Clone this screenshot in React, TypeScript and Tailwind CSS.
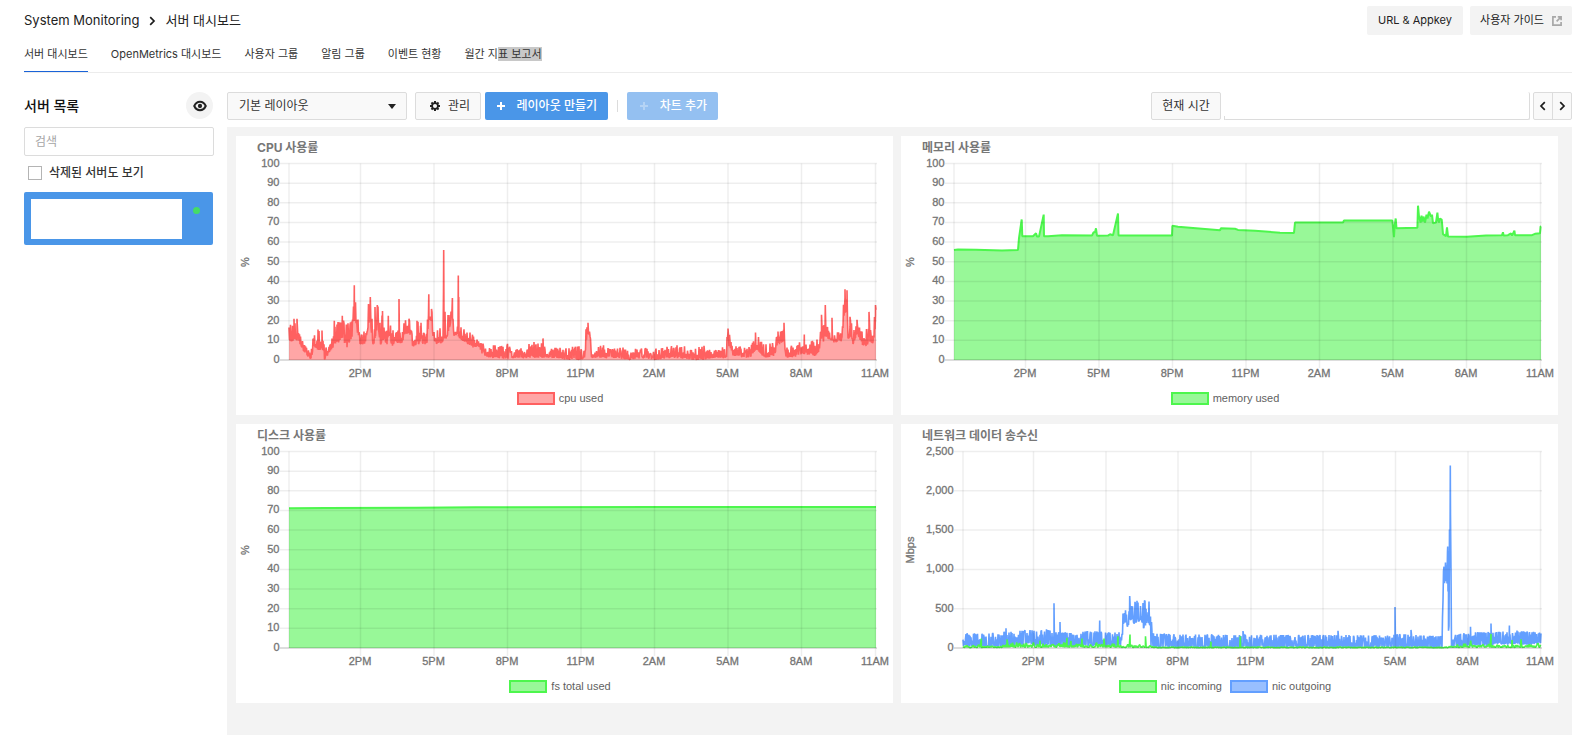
import React from "react";

type Point = [number, number];
type Band = [number, number, number];

interface Series {
  name: string;
  stroke: string;
  fill: string;
  filled: boolean;
  points: Point[];
}

interface ChartProps {
  title: string;
  unit: string;
  max: number;
  ticks: string[];
  left: number;
  hours: number[];
  series: Series[];
}

const TOP = 27.5;
const BOTTOM = 224;
const RIGHT = 640;
const HOUR_LABELS = ["2PM", "5PM", "8PM", "11PM", "2AM", "5AM", "8AM", "11AM"];

const RED = { stroke: "#ff6060", fill: "#ffa6a6" };
const GREEN = { stroke: "#4df64d", fill: "#98f898" };
const BLUE = { stroke: "#639fff", fill: "#98bfff" };

function makeRandom(seed: number) {
  let s = seed;
  return () => {
    s = (s * 1664525 + 1013904223) % 4294967296;
    return s / 4294967296;
  };
}

/* Samples a jittering signal between a low and a high envelope. */
function sample(bands: Band[], spikes: Point[], step: number, seed: number, bias: number): Point[] {
  const rnd = makeRandom(seed);
  const out: Point[] = [];
  const end = bands[bands.length - 1][0];
  let i = 0;
  let up = false;
  for (let x = bands[0][0]; x <= end; x += step) {
    while (i < bands.length - 2 && bands[i + 1][0] <= x) i++;
    const a = bands[i];
    const b = bands[i + 1];
    const t = (x - a[0]) / (b[0] - a[0]);
    const lo = a[1] + (b[1] - a[1]) * t;
    const hi = a[2] + (b[2] - a[2]) * t;
    up = rnd() < 0.7 ? !up : up;
    const r = Math.pow(rnd(), bias);
    out.push([x, up ? hi - (hi - lo) * 0.7 * r : lo + (hi - lo) * 0.15 * r]);
  }
  spikes.forEach(([sx, v]) => {
    out.push([sx, v]);
  });
  return out.sort((p, q) => p[0] - q[0]);
}

const cpu = sample(
  [
    [53, 10, 18], [57, 9, 21], [62, 10, 21], [66, 6, 11], [69, 3, 9], [76, 0, 7], [77, 7, 12], [82, 4, 15],
    [86, 6, 15], [88, 0, 9], [94, 4, 8], [98, 7, 19], [106, 10, 22], [111, 6, 18], [116, 11, 22], [117, 18, 33],
    [119, 20, 34], [121, 15, 23], [124, 8, 16], [129, 8, 16], [132, 15, 28], [134, 22, 32], [136, 8, 28], [138, 8, 13],
    [140, 12, 27], [142, 18, 28], [144, 7, 20], [147, 10, 25], [151, 8, 20], [153, 12, 22], [156, 7, 14], [159, 8, 20],
    [166, 8, 15], [168, 12, 20], [173, 14, 21], [177, 6, 13], [181, 8, 20], [185, 8, 18], [190, 8, 12], [191, 8, 25],
    [193, 20, 33], [196, 18, 26], [197, 10, 14], [201, 8, 15], [204, 9, 19], [206, 8, 18], [207, 9, 40], [209, 10, 31],
    [212, 12, 24], [216, 22, 31], [218, 12, 16], [221, 13, 17], [224, 10, 20], [229, 9, 15], [237, 6, 14], [242, 7, 13],
    [246, 3, 9], [251, 1, 6], [257, 1, 8], [264, 1, 8], [271, 0, 9], [277, 1, 6], [286, 1, 6], [294, 1, 9],
    [307, 1, 10], [311, 1, 5], [321, 1, 7], [331, 0, 6], [344, 0, 8], [349, 1, 5], [350, 8, 16], [352, 14, 19],
    [354, 12, 16], [355, 1, 6], [367, 1, 8], [381, 1, 6], [392, 0, 8], [407, 1, 7], [421, 0, 6], [442, 1, 8],
    [457, 0, 6], [466, 0, 8], [477, 1, 5], [490, 1, 8], [491, 2, 15], [492, 8, 16], [495, 5, 11], [497, 2, 7],
    [514, 1, 7], [520, 5, 13], [526, 2, 10], [531, 1, 8], [538, 2, 9], [542, 8, 14], [546, 8, 15], [548, 10, 19],
    [550, 1, 7], [554, 1, 7], [562, 2, 9], [569, 3, 9], [579, 2, 10], [583, 4, 11], [586, 10, 23], [587, 7, 18],
    [589, 12, 28], [592, 10, 16], [596, 10, 21], [599, 8, 13], [602, 10, 17], [606, 9, 12], [608, 22, 34],
    [611, 25, 36], [612, 10, 18], [614, 12, 22], [617, 8, 16], [621, 13, 20], [626, 8, 15], [629, 5, 12],
    [633, 9, 22], [636, 8, 14], [638, 10, 20], [640, 20, 28],
  ],
  [
    [58, 21], [61, 21], [82, 15.5], [86, 15], [98.3, 20], [106.3, 22.5], [110.3, 18],
    [118.3, 38], [134.3, 32], [139, 27], [141.3, 28], [146.5, 25], [152.3, 22.5], [163, 31], [173, 21], [181, 20], [185, 19],
    [192.8, 33.5], [195.5, 26], [207.7, 56], [216.4, 31.5], [222.3, 43], [222.8, 32],
    [307, 11], [352, 19], [492, 16], [519.5, 14], [542, 14.5], [544.5, 14.5], [548, 19], [568.3, 13], [585.5, 23],
    [589.3, 28], [596, 21.5], [609, 36], [611, 35.5], [614, 22], [621, 20.5], [633, 24.5], [639.5, 28],
  ],
  0.5,
  77,
  1
);

const memory: Point[] = [
  [53, 56], [57, 56.3], [75, 56.1], [101, 55.7], [117, 56], [118, 62], [120.7, 71.5], [121.3, 63], [132, 63], [135, 64.5],
  [136, 62.8], [138, 62.8], [142.7, 74], [143, 63], [147, 63], [161, 63.5], [191, 63.3], [192.5, 65], [194, 65], [195, 67],
  [196, 63.2], [207, 63.3], [209, 64], [212, 63.5], [217, 74.5], [217.5, 63.4], [271, 63.3], [271.4, 68.3], [277, 67.8],
  [319, 66], [320, 67], [334, 66.8], [337, 66.2], [354, 65.8], [379, 64.8], [393, 64.7], [394, 70], [442, 70], [443, 71],
  [491.3, 71], [493, 62.5], [493.6, 68], [494.7, 72], [495.5, 67], [516.4, 67.3], [517, 78.5], [518, 73], [519.6, 70],
  [520.5, 73.5], [521.5, 70.5], [522.5, 73], [524, 70], [525.5, 74], [526.5, 72], [528, 75.5], [530, 73], [531, 74],
  [532, 69.5], [535, 70], [536.4, 75], [537.2, 71], [538, 70], [539, 72], [540.7, 71.5],
  [542, 64], [545, 63], [546, 67.5], [547, 62.8], [566, 62.7], [585, 63.3], [601, 63.5], [602, 65], [602.6, 63.3],
  [607, 63.5], [610, 64.5], [611, 63.3], [613.4, 65.8], [614, 63.5], [631, 63.5], [634, 64.2], [639, 64.5], [639.6, 68],
  [640, 68],
];

const disk: Point[] = [[53, 71.1], [90, 71.2], [180, 71.4], [240, 71.6], [420, 71.7], [560, 71.7], [640, 71.8]];

const outgoing = sample(
  [
    [62, 20, 190], [80, 20, 185], [100, 15, 190], [105, 20, 230], [112, 20, 200], [128, 60, 240], [136, 20, 210],
    [145, 30, 240], [155, 20, 200], [175, 20, 190], [188, 30, 220], [205, 20, 200], [221, 40, 200], [222, 290, 540],
    [225, 330, 470], [227, 250, 430], [229, 370, 620], [233, 310, 610], [237, 330, 600], [240, 370, 550], [243, 220, 610],
    [246, 340, 580], [249, 290, 600], [250, 10, 500], [251, 10, 200], [256, 5, 180], [300, 5, 170], [400, 5, 165],
    [492, 5, 165], [496, 5, 180], [520, 5, 160], [541, 5, 150], [542, 600, 950], [544, 900, 1120], [547, 720, 1290],
    [548, 220, 1500], [549, 1000, 2200], [550, 10, 1200], [551, 10, 60], [553, 10, 170], [570, 20, 200], [588, 30, 200],
    [600, 50, 210], [610, 50, 230], [625, 40, 210], [640, 60, 210],
  ],
  [
    [105, 250], [153, 570], [159, 330], [198.7, 350], [228.7, 660], [342, 215], [437, 220], [494, 520], [510, 230],
    [546.7, 1290], [547.5, 220], [549.3, 2320], [569.5, 270], [590, 310], [608.4, 285],
  ],
  0.5,
  2024,
  2.4
);

const incoming = sample(
  [
    [62, 4, 40], [80, 4, 60], [81, 5, 30], [100, 5, 50], [110, 5, 80], [140, 5, 70], [170, 5, 80], [200, 5, 80],
    [220, 5, 50], [250, 5, 40], [256, 3, 16], [542, 3, 16], [560, 5, 60], [600, 5, 50], [640, 5, 70],
  ],
  [
    [80.3, 120], [106, 110], [139, 95], [166, 130], [170, 90], [181, 120], [203, 120], [217, 150], [229, 170], [244.5, 150],
    [310, 80], [339.3, 150], [569.7, 95], [590, 180], [611, 100], [620, 110],
  ],
  0.8,
  5,
  0.6
);

const PERCENT_TICKS = ["0", "10", "20", "30", "40", "50", "60", "70", "80", "90", "100"];
const HOURS = [124.5, 198, 271.5, 345, 418.5, 492, 565.5, 639.5];
const NET_HOURS = [132.5, 205, 277, 350, 422, 494.5, 567, 639.5];

const charts: ChartProps[] = [
  {
    title: "CPU 사용률", unit: "%", max: 100, ticks: PERCENT_TICKS, left: 53, hours: HOURS,
    series: [{ name: "cpu used", ...RED, filled: true, points: cpu }],
  },
  {
    title: "메모리 사용률", unit: "%", max: 100, ticks: PERCENT_TICKS, left: 53, hours: HOURS,
    series: [{ name: "memory used", ...GREEN, filled: true, points: memory }],
  },
  {
    title: "디스크 사용률", unit: "%", max: 100, ticks: PERCENT_TICKS, left: 53, hours: HOURS,
    series: [{ name: "fs total used", ...GREEN, filled: true, points: disk }],
  },
  {
    title: "네트워크 데이터 송수신", unit: "Mbps", max: 2500,
    ticks: ["0", "500", "1,000", "1,500", "2,000", "2,500"], left: 62, hours: NET_HOURS,
    series: [
      { name: "nic incoming", ...GREEN, filled: false, points: incoming },
      { name: "nic outgoing", ...BLUE, filled: false, points: outgoing },
    ],
  },
];

function ChartCard({ title, unit, max, ticks, left, hours, series }: ChartProps) {
  const y = (v: number) => BOTTOM - (v / max) * (BOTTOM - TOP);
  const path = (pts: Point[]) => "M" + pts.map(([px, v]) => `${px.toFixed(1)} ${y(v).toFixed(1)}`).join("L");
  const step = max / (ticks.length - 1);
  return (
    <section className="bg-white">
      <h2 className="h-[22px] pl-[21px] pt-[2px] text-[12px] leading-[20px] font-bold text-[#777777]">{title}</h2>
      <svg
        viewBox="0 22 657 224"
        className="block w-full font-['Liberation_Sans',Arial,sans-serif] text-[11px]"
        role="img"
        aria-label={title}
      >
        {[...series].reverse().map((s) => (
          <g key={s.name}>
            {s.filled && <path d={`${path(s.points)}L${RIGHT} ${BOTTOM}L${left} ${BOTTOM}Z`} fill={s.fill} />}
            <path
              d={path(s.points)}
              fill="none"
              stroke={s.stroke}
              strokeWidth={s.points.length < 120 ? 2 : 1.6}
              strokeLinejoin="bevel"
            />
          </g>
        ))}
        <g stroke="#000000" strokeWidth="1.5" strokeOpacity="0.065">
          {ticks.map((t, i) => (
            <line key={t} x1={left - 9} x2={RIGHT + 1} y1={y(i * step)} y2={y(i * step)} strokeOpacity={i === 0 ? 0.18 : 0.065} />
          ))}
          {[left, ...hours].map((h) => (
            <line key={h} x1={h} x2={h} y1={TOP} y2={BOTTOM + (h === left ? 0 : 8)} />
          ))}
        </g>
        <g fill="#747474" stroke="#747474" strokeWidth="0.3">
          {ticks.map((t, i) => (
            <text key={t} x={left - 9.5} y={y(i * step) + 3} textAnchor="end">{t}</text>
          ))}
          {hours.map((h, i) => (
            <text key={h} x={h - 0.5} y={241} textAnchor="middle">{HOUR_LABELS[i]}</text>
          ))}
          <text transform="translate(13 126) rotate(-90)" textAnchor="middle">{unit}</text>
        </g>
      </svg>
      <ul className="flex h-[33px] items-center justify-center gap-2 pr-[9px] font-['Liberation_Sans',Arial,sans-serif] text-[11px] text-[#5f5f5f]">
        {series.map((s) => (
          <li key={s.name} className="flex items-center gap-1">
            <span className="h-[13px] w-[38px] border-2" style={{ borderColor: s.stroke, backgroundColor: s.fill }} />
            {s.name}
          </li>
        ))}
      </ul>
    </section>
  );
}

function Chevron({ flip = false }: { flip?: boolean }) {
  return (
    <svg viewBox="0 0 10 10" className="h-[10px] w-[10px]" fill="none" stroke="#1c1c1c" strokeWidth="1.7" aria-hidden="true">
      <path d={flip ? "M6.8 1.2L3 5l3.8 3.8" : "M3.2 1.2L7 5 3.2 8.8"} />
    </svg>
  );
}

function EyeIcon() {
  return (
    <svg viewBox="0 0 24 24" className="h-4 w-4" fill="none" stroke="#222222" aria-hidden="true">
      <path d="M3.400 12C5.200 7.900 8.400 5.800 12 5.800s6.800 2.100 8.600 6.200c-1.800 4.100-5 6.200-8.600 6.200S5.200 16.100 3.400 12z" strokeWidth="3" />
      <circle cx="12" cy="12" r="3.200" fill="#222222" stroke="none" />
    </svg>
  );
}

function GearIcon() {
  return (
    <svg viewBox="0 0 20 20" className="h-[10px] w-[10px]" fill="none" stroke="#222222" aria-hidden="true">
      <circle cx="10" cy="10" r="5.800" strokeWidth="3.400" />
      <path
        d="M10 0v4M10 16v4M0 10h4M16 10h4M2.900 2.900l2.800 2.800M14.300 14.300l2.800 2.800M17.100 2.900l-2.800 2.800M5.700 14.300l-2.800 2.800"
        strokeWidth="4"
      />
    </svg>
  );
}

function PlusIcon() {
  return (
    <svg viewBox="0 0 8 8" className="h-2 w-2" stroke="currentColor" strokeWidth="2" aria-hidden="true">
      <path d="M4 0v8M0 4h8" />
    </svg>
  );
}

function ExternalIcon() {
  return (
    <svg viewBox="0 0 10 10" className="h-[10px] w-[10px]" fill="none" stroke="#a8a8a8" strokeWidth="1.700" aria-hidden="true">
      <path d="M4 .9H.9v8.200h8.200V6M5.800.9h3.300v3.300M9 1L4.600 5.400" />
    </svg>
  );
}

const tabs = ["서버 대시보드", "OpenMetrics 대시보드", "사용자 그룹", "알림 그룹", "이벤트 현황"];

export default function App() {
  return (
    <div className="flex min-h-screen flex-col bg-white pr-[15px] pl-6 font-['Inter','Noto_Sans_CJK_KR',sans-serif] text-[12px] text-[#333333]">
      <header className="flex h-[41px] items-center justify-between">
        <nav className="flex items-center gap-2 text-[13px] text-[#222222]" aria-label="breadcrumb">
          <a href="#monitoring">System Monitoring</a>
          <Chevron />
          <h1>서버 대시보드</h1>
        </nav>
        <div className="flex gap-[7px] text-[11px] text-[#222222]">
          <button className="h-[29px] w-24 rounded-xs bg-[#f3f3f3]">URL &amp; Appkey</button>
          <a href="#guide" className="flex h-[29px] w-[102px] items-center justify-center gap-2 rounded-xs bg-[#f3f3f3]">
            사용자 가이드
            <ExternalIcon />
          </a>
        </div>
      </header>

      <nav className="flex h-8 gap-[23px] border-b border-[#ececec] text-[11px]" aria-label="tabs">
        {tabs.map((t, i) => (
          <a
            key={t}
            href="#tab"
            className={
              i === 0
                ? "h-[31px] border-b border-[#1a63d8] pt-[4px] leading-[18px]"
                : "h-[31px] pt-[4px] leading-[18px]"
            }
          >
            {t}
          </a>
        ))}
        <a href="#tab" className="h-[31px] pt-[4px] leading-[18px]">
          월간 지<span className="inline-block h-[14px] bg-[#c8c8c8] leading-[14px]">표 보고서</span>
        </a>
      </nav>

      <div className="flex grow gap-[13px] pt-[19px]">
        <aside className="w-[190px] shrink-0">
          <div className="flex h-[27px] items-center justify-between pr-px">
            <h2 className="text-[14px] font-medium text-[#111111]">서버 목록</h2>
            <button className="flex h-[27px] w-[27px] items-center justify-center rounded-full bg-[#f3f3f3]" aria-label="보기 설정">
              <EyeIcon />
            </button>
          </div>
          <input
            type="search"
            aria-label="검색"
            placeholder="검색"
            className="mt-2 block h-[29px] w-full rounded-xs border border-[#dcdcdc] px-[10px] placeholder:text-[#a6a6a6]"
          />
          <label className="mt-[7px] flex h-5 items-center gap-[7px] pl-1 text-[12px] font-medium">
            <input type="checkbox" className="h-[14px] w-[14px] appearance-none border border-[#b4b4b4] bg-white" />
            삭제된 서버도 보기
          </label>
          <button className="mt-[9px] flex h-[53px] w-[189px] gap-[11px] rounded-xs bg-[#4a96e8] p-[7px]" aria-label="서버">
            <span className="h-10 w-[151px] bg-white" />
            <span className="mt-2 h-[7px] w-[7px] rounded-full bg-[#45dc66]" />
          </button>
        </aside>

        <main className="flex min-w-0 grow flex-col">
          <div className="flex h-7 items-center">
            <label className="relative">
              <select
                aria-label="레이아웃"
                className="block h-7 w-[180px] appearance-none rounded-xs border border-[#dcdcdc] bg-[#f9f9f9] pl-[11px]"
              >
                <option>기본 레이아웃</option>
              </select>
              <svg viewBox="0 0 8 5" className="pointer-events-none absolute top-[12px] right-[11px] h-[5px] w-2" aria-hidden="true">
                <path d="M0 0h8L4 5z" fill="#222222" />
              </svg>
            </label>
            <button className="ml-2 flex h-7 w-[66px] items-center justify-end gap-2 rounded-xs border border-[#dcdcdc] bg-[#f9f9f9] pr-[10px]">
              <GearIcon />
              관리
            </button>
            <button className="ml-1 flex h-7 w-[123px] items-center justify-end gap-3 rounded-xs bg-[#4a96e8] pr-[11px] font-medium text-white">
              <PlusIcon />
              레이아웃 만들기
            </button>
            <span className="mx-[9px] h-3 w-px bg-[#dcdcdc]" />
            <button disabled className="flex h-7 w-[91px] items-center justify-end gap-3 rounded-xs bg-[#94c0f1] pr-[11px] font-medium text-white">
              <span className="opacity-30"><PlusIcon /></span>
              차트 추가
            </button>
            <div className="ml-auto flex gap-[3px]">
              <button className="h-7 w-[70px] rounded-xs border border-[#dcdcdc] bg-[#f9f9f9]">현재 시간</button>
              <div className="relative">
                <input
                  type="text"
                  aria-label="조회 기간"
                  className="block h-7 w-[306px] rounded-xs border-r border-b border-[#dcdcdc] px-2"
                />
                <span className="absolute bottom-0 left-0 h-1 w-px bg-[#dcdcdc]" />
              </div>
              <div className="flex h-7 w-[39px] divide-x divide-[#dcdcdc] rounded-xs border border-[#dcdcdc] bg-[#f9f9f9]">
                <button className="flex flex-1 items-center justify-center" aria-label="이전"><Chevron flip /></button>
                <button className="flex flex-1 items-center justify-center" aria-label="다음"><Chevron /></button>
              </div>
            </div>
          </div>

          <div className="mt-[7px] grid grow grid-cols-2 content-start gap-x-2 gap-y-[9px] bg-[#f3f3f3] pt-[9px] pr-[14px] pb-8 pl-[9px]">
            {charts.map((c) => (
              <ChartCard key={c.title} {...c} />
            ))}
          </div>
        </main>
      </div>
    </div>
  );
}
